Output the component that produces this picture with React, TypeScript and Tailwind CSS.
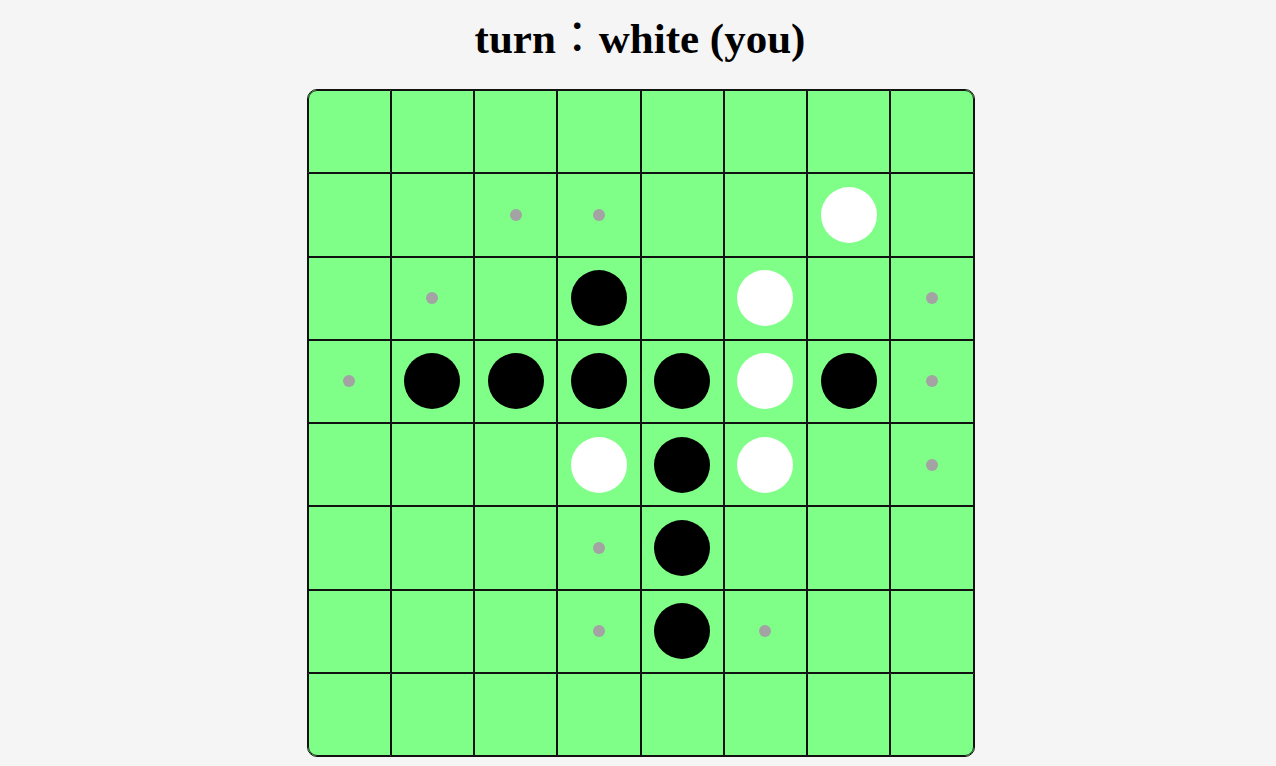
import React from "react";

type Cell = "." | "b" | "w" | "d";

const rows: string[] = [
  "........",
  "..dd..w.",
  ".d.b.w.d",
  "dbbbbwbd",
  "...wbw.d",
  "...db...",
  "...dbd..",
  "........",
];

function cornerClass(r: number, c: number): string {
  if (r === 0 && c === 0) return "rounded-tl-[9px]";
  if (r === 0 && c === 7) return "rounded-tr-[9px]";
  if (r === 7 && c === 0) return "rounded-bl-[9px]";
  if (r === 7 && c === 7) return "rounded-br-[9px]";
  return "";
}

export default function App() {
  return (
    <div className="w-[1276px] h-[766px] bg-[#f5f5f5] flex flex-col items-center overflow-hidden">
      <h1
        className="mt-[12px] h-[44px] ml-[4px] text-[43px] leading-[44px] font-bold text-black whitespace-nowrap"
        style={{ fontFamily: '"Liberation Serif", "Noto Sans CJK JP", serif' }}
      >
        turn
        <span className="font-normal" style={{ fontFamily: '"Noto Sans CJK JP", sans-serif' }}>
          ：
        </span>
        white (you)
      </h1>
      <div className="mt-[33px] ml-[5px] w-[668px] h-[668px] border border-[#111] rounded-[10px] overflow-hidden grid grid-cols-8 grid-rows-8 bg-[#80ff88]">
        {rows.map((row, r) =>
          row.split("").map((c, ci) => {
            const cell = c as Cell;
            return (
              <div
                key={`${r}-${ci}`}
                className={`flex items-center justify-center border border-[#111] ${cornerClass(r, ci)}`}
              >
                {cell === "b" && <div className="w-[56px] h-[56px] rounded-full bg-black" />}
                {cell === "w" && <div className="w-[56px] h-[56px] rounded-full bg-white" />}
                {cell === "d" && <div className="w-[12px] h-[12px] rounded-full bg-[#a3a3a3]" />}
              </div>
            );
          })
        )}
      </div>
    </div>
  );
}
